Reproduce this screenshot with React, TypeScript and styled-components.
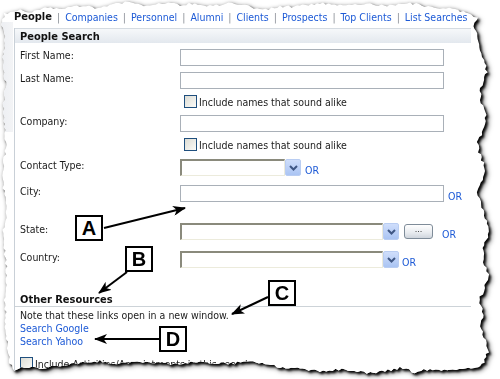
import styled, { createGlobalStyle } from "styled-components";

const GlobalStyle = createGlobalStyle`
  body {
    margin: 0;
    background: #ffffff;
  }
`;

const Stage = styled.div`
  position: relative;
  width: 500px;
  height: 379px;
  overflow: hidden;
  background: #ffffff;
  font-family: "DejaVu Sans Condensed", "DejaVu Sans", "Liberation Sans", sans-serif;
  font-size: 10.5px;
  color: #1b1b1b;
`;

const PaperShadow = styled.div`
  filter: drop-shadow(2px 2px 1px rgba(0, 0, 0, 0.95)) drop-shadow(1px 1px 2px rgba(0, 0, 0, 0.55));
`;

const Paper = styled.div<{ $clip: string }>`
  width: 500px;
  height: 379px;
  box-sizing: border-box;
  padding: 11px 0 0 14px;
  background: linear-gradient(90deg, #eceef2, #f3f4f6) 0 22px / 13px 110px no-repeat, #ffffff;
  clip-path: ${(p) => p.$clip};
`;

const TabBar = styled.div`
  display: flex;
  align-items: center;
  height: 12px;
  line-height: 12px;
  white-space: nowrap;
`;

const Tab = styled.span<{ $active?: boolean }>`
  color: ${(p) => (p.$active ? "#111111" : "#1d5ad6")};
  font-weight: ${(p) => (p.$active ? "bold" : "normal")};
  font-size: ${(p) => (p.$active ? "11px" : "10.5px")};
`;

const Sep = styled.span`
  color: #8a8f96;
  margin: 0 5px;
`;

const Panel = styled.div`
  margin-top: 5px;
  width: 456px;
  border-left: 1px solid #c9d0d7;
  height: 360px;
  background: #ffffff;
`;

const PanelHeader = styled.div`
  height: 15px;
  line-height: 15px;
  padding-left: 5px;
  border-top: 1px solid #d5dbe1;
  box-sizing: border-box;
  background: linear-gradient(#f6f8fa, #e3e8ee);
  font-weight: bold;
  font-size: 11px;
  color: #111111;
`;

const Form = styled.div`
  padding: 6px 0 0 5px;
`;

const Row = styled.div<{ $top: number }>`
  display: flex;
  align-items: flex-start;
  margin-top: ${(p) => p.$top}px;
`;

const Label = styled.div`
  width: 160px;
  flex: none;
  line-height: 12px;
`;

const Field = styled.div`
  display: flex;
  align-items: center;
  height: 17px;
`;

const TextBox = styled.div<{ $width: number }>`
  width: ${(p) => p.$width}px;
  height: 17px;
  box-sizing: border-box;
  border: 1px solid #a9b0b8;
  background: #ffffff;
`;

const SelectBox = styled.div<{ $width: number }>`
  width: ${(p) => p.$width}px;
  height: 17px;
  box-sizing: border-box;
  border-top: 2px solid #8a8a7c;
  border-left: 2px solid #8a8a7c;
  border-right: 1px solid #ecebdc;
  border-bottom: 1px solid #ecebdc;
  background: #ffffff;
`;

const DropButton = styled.div`
  width: 16px;
  height: 17px;
  box-sizing: border-box;
  border: 1px solid #b9cdf2;
  border-radius: 2px;
  background: linear-gradient(#cfdefb, #aac4f3);
  display: flex;
  align-items: center;
  justify-content: center;
`;

const DotsButton = styled.div`
  margin-left: 5px;
  width: 29px;
  height: 15px;
  box-sizing: border-box;
  border: 1px solid #7f8c99;
  border-radius: 3px;
  background: linear-gradient(#ffffff, #e8ebef 60%, #cfd5dd);
  font-size: 9px;
  line-height: 9px;
  text-align: center;
  color: #333333;
`;

const OrLink = styled.span<{ $gap: number }>`
  color: #1d5ad6;
  margin-left: ${(p) => p.$gap}px;
  line-height: 12px;
  padding-top: 5px;
`;

const CheckRow = styled.div<{ $top: number; $indent: number }>`
  display: flex;
  align-items: center;
  height: 13px;
  margin-top: ${(p) => p.$top}px;
  padding-left: ${(p) => p.$indent}px;
  white-space: nowrap;
`;

const CheckBox = styled.div`
  width: 13px;
  height: 13px;
  box-sizing: border-box;
  border: 1px solid #1f4f7e;
  background: linear-gradient(135deg, #dcdcd4, #fbfbf8);
  margin-right: 2px;
  flex: none;
`;

const SectionTitle = styled.div`
  margin: 25px 0 0 -5px;
  padding-left: 5px;
  font-weight: bold;
  font-size: 11px;
  line-height: 13px;
  color: #111111;
  border-bottom: 1px solid #cdd3d8;
`;

const Note = styled.div`
  margin-top: 2px;
  line-height: 13px;
`;

const ResourceLink = styled.div`
  color: #1d5ad6;
  line-height: 13px;
`;

const Callout = styled.div<{ $x: number; $y: number }>`
  position: absolute;
  left: ${(p) => p.$x}px;
  top: ${(p) => p.$y}px;
  width: 28px;
  height: 26px;
  box-sizing: border-box;
  border: 2px solid #000000;
  background: #ffffff;
  font-family: "Liberation Sans", Arial, sans-serif;
  font-weight: bold;
  font-size: 20px;
  line-height: 22px;
  text-align: center;
  color: #000000;
`;

const ArrowLayer = styled.svg`
  position: absolute;
  left: 0;
  top: 0;
  pointer-events: none;
`;

function seeded(seed: number) {
  let s = seed;
  return () => {
    s = (s * 16807) % 2147483647;
    return (s - 1) / 2147483646;
  };
}

const outline: [number, number][] = [
  [4, 14], [20, 10], [32, 12], [45, 8], [62, 9], [80, 6], [98, 8], [110, 5], [125, 2], [138, 5],
  [150, 6], [165, 3], [180, 5], [195, 3], [210, 6], [235, 3], [248, 6], [260, 10], [280, 7],
  [300, 6], [320, 3], [340, 5], [370, 4], [390, 6], [410, 3], [425, 6], [440, 8],
  [458, 10], [468, 14], [477, 17],
  [474, 26], [478, 36], [481, 50], [484, 60], [487, 72], [481, 88], [480, 100], [486, 115],
  [484, 130], [477, 142], [479, 152], [485, 168], [483, 180], [478, 192], [481, 205],
  [486, 218], [490, 232], [483, 248], [484, 262], [488, 274], [485, 288], [479, 300],
  [483, 312], [481, 326], [485, 340], [488, 352], [484, 362], [478, 368],
  [462, 368], [450, 371], [430, 369], [415, 372], [400, 368], [385, 371], [370, 373],
  [345, 369], [320, 371], [300, 369], [280, 367], [262, 364], [250, 361], [228, 364],
  [200, 362], [170, 364], [140, 362], [120, 364], [100, 361], [80, 363], [60, 366],
  [40, 368], [25, 367], [13, 371],
  [9, 360], [8, 348], [5, 330], [6, 315], [4, 300], [7, 285], [6, 260], [3, 245], [3, 230],
  [7, 215], [6, 200], [3, 185], [4, 160], [6, 145], [5, 130], [3, 115], [4, 100], [6, 85],
  [3, 60], [5, 40], [2, 25],
];

function tornClip(loop: [number, number][]) {
  const rand = seeded(97);
  const pts: string[] = [];
  loop.forEach((a, i) => {
    const b = loop[(i + 1) % loop.length];
    const dx = b[0] - a[0];
    const dy = b[1] - a[1];
    const len = Math.hypot(dx, dy);
    const steps = Math.max(1, Math.round(len / 3));
    const nx = -dy / len;
    const ny = dx / len;
    for (let s = 0; s < steps; s++) {
      const t = s / steps;
      const j = (rand() - 0.5) * 2.6;
      pts.push(`${(a[0] + dx * t + nx * j).toFixed(1)}px ${(a[1] + dy * t + ny * j).toFixed(1)}px`);
    }
  });
  return `polygon(${pts.join(", ")})`;
}

const paperClip = tornClip(outline);

const tabs = ["Companies", "Personnel", "Alumni", "Clients", "Prospects", "Top Clients", "List Searches"];

function Chevron() {
  return (
    <svg width="9" height="6" viewBox="0 0 9 6">
      <path d="M1 1 L4.5 4.5 L8 1" fill="none" stroke="#3f5784" strokeWidth="2" />
    </svg>
  );
}

function Dropdown({ width }: { width: number }) {
  return (
    <>
      <SelectBox $width={width} />
      <DropButton>
        <Chevron />
      </DropButton>
    </>
  );
}

const arrows = [
  { x1: 104, y1: 228, x2: 185, y2: 208 },
  { x1: 127, y1: 272, x2: 99, y2: 293 },
  { x1: 268, y1: 297, x2: 232, y2: 314 },
  { x1: 159, y1: 339, x2: 95, y2: 339 },
];

export default function App() {
  return (
    <Stage>
      <GlobalStyle />
      <PaperShadow>
        <Paper $clip={paperClip}>
          <TabBar>
            <Tab $active>People</Tab>
            {tabs.map((t) => (
              <span key={t}>
                <Sep>|</Sep>
                <Tab>{t}</Tab>
              </span>
            ))}
          </TabBar>
          <Panel>
            <PanelHeader>People Search</PanelHeader>
            <Form>
              <Row $top={0}>
                <Label>First Name:</Label>
                <Field>
                  <TextBox $width={264} />
                </Field>
              </Row>
              <Row $top={6}>
                <Label>Last Name:</Label>
                <Field>
                  <TextBox $width={264} />
                </Field>
              </Row>
              <CheckRow $top={6} $indent={164}>
                <CheckBox />
                Include names that sound alike
              </CheckRow>
              <Row $top={7}>
                <Label>Company:</Label>
                <Field>
                  <TextBox $width={264} />
                </Field>
              </Row>
              <CheckRow $top={6} $indent={164}>
                <CheckBox />
                Include names that sound alike
              </CheckRow>
              <Row $top={8}>
                <Label>Contact Type:</Label>
                <Field>
                  <Dropdown width={105} />
                  <OrLink $gap={4}>OR</OrLink>
                </Field>
              </Row>
              <Row $top={9}>
                <Label>City:</Label>
                <Field>
                  <TextBox $width={264} />
                  <OrLink $gap={4}>OR</OrLink>
                </Field>
              </Row>
              <Row $top={21}>
                <Label>State:</Label>
                <Field>
                  <Dropdown width={203} />
                  <DotsButton>...</DotsButton>
                  <OrLink $gap={9}>OR</OrLink>
                </Field>
              </Row>
              <Row $top={11}>
                <Label>Country:</Label>
                <Field>
                  <Dropdown width={203} />
                  <OrLink $gap={3}>OR</OrLink>
                </Field>
              </Row>
              <SectionTitle>Other Resources</SectionTitle>
              <Note>Note that these links open in a new window.</Note>
              <ResourceLink>Search Google</ResourceLink>
              <ResourceLink>Search Yahoo</ResourceLink>
              <CheckRow $top={9} $indent={0}>
                <CheckBox />
                Include Activities/Appointments in this search
              </CheckRow>
            </Form>
          </Panel>
        </Paper>
      </PaperShadow>

      <ArrowLayer width="500" height="379" viewBox="0 0 500 379">
        <defs>
          <marker id="head" markerUnits="userSpaceOnUse" markerWidth="13" markerHeight="10" refX="12" refY="5" orient="auto">
            <path d="M0 0 L13 5 L0 10 L3.5 5 Z" fill="#000" />
          </marker>
        </defs>
        {arrows.map((a, i) => (
          <line key={i} x1={a.x1} y1={a.y1} x2={a.x2} y2={a.y2} stroke="#000" strokeWidth="2" markerEnd="url(#head)" />
        ))}
      </ArrowLayer>
      <Callout $x={75} $y={215}>A</Callout>
      <Callout $x={125} $y={246}>B</Callout>
      <Callout $x={268} $y={280}>C</Callout>
      <Callout $x={159} $y={326}>D</Callout>
    </Stage>
  );
}
